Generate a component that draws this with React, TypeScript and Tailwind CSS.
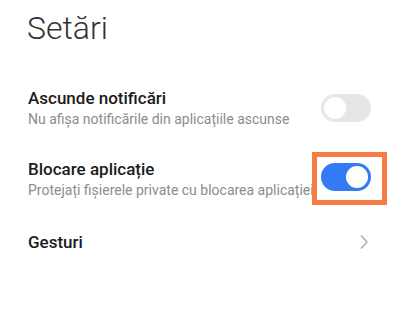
import { ReactNode } from "react";

function Toggle({ on }: { on: boolean }) {
  return (
    <div
      className={
        on
          ? "flex h-[28px] w-[50px] items-center justify-end rounded-full bg-[#337af5] px-[3px]"
          : "flex h-[28px] w-[50px] items-center justify-start rounded-full bg-[#e6e6e6] px-[3px]"
      }
    >
      <div className="h-[22px] w-[22px] rounded-full bg-white" />
    </div>
  );
}

function Row({
  title,
  sub,
  right,
}: {
  title: string;
  sub: string;
  right: ReactNode;
}) {
  return (
    <div className="flex h-[71px] items-center pl-[28px] pr-[28px]">
      <div className="min-w-0 flex-1 whitespace-nowrap">
        <p className="text-[17px] leading-[20px] font-medium text-[#1b1b1b]">{title}</p>
        <p className="mt-[2px] text-[14px] leading-[18px] text-[#8c8c8c]">{sub}</p>
      </div>
      {right}
    </div>
  );
}

export default function App() {
  return (
    <div
      className="h-[311px] w-[399px] overflow-hidden bg-white"
      style={{ fontFamily: "Roboto, 'Noto Sans', sans-serif" }}
    >
      {/* Header */}
      <div className="h-[72px] pl-[27px] pt-2">
        <h1 className="text-[32px] leading-[40px] font-light text-[#333333]">Setări</h1>
      </div>

      <Row
        title="Ascunde notificări"
        sub="Nu afișa notificările din aplicațiile ascunse"
        right={
          <div className="relative z-10 shrink-0">
            <Toggle on={false} />
          </div>
        }
      />

      <Row
        title="Blocare aplicație"
        sub="Protejați fișierele private cu blocarea aplicației"
        right={
          <div className="relative z-10 mb-1 shrink-0">
            {/* highlight box */}
            <div className="absolute left-[-9px] top-[-11px] h-[53px] w-[75px] border-[5px] border-[#f77b45] bg-white" />
            <div className="relative">
              <Toggle on={true} />
            </div>
          </div>
        }
      />

      {/* Gesturi */}
      <div className="flex h-[55px] items-center pl-[28px] pr-[31px]">
        <p className="flex-1 text-[17px] leading-[20px] font-medium text-[#1b1b1b]">Gesturi</p>
        <svg width="8" height="16" viewBox="0 0 8 16" fill="none">
          <path d="M1 1.5 L7 8 L1 14.5" stroke="#a3a3a3" strokeWidth="1.3" />
        </svg>
      </div>
    </div>
  );
}
